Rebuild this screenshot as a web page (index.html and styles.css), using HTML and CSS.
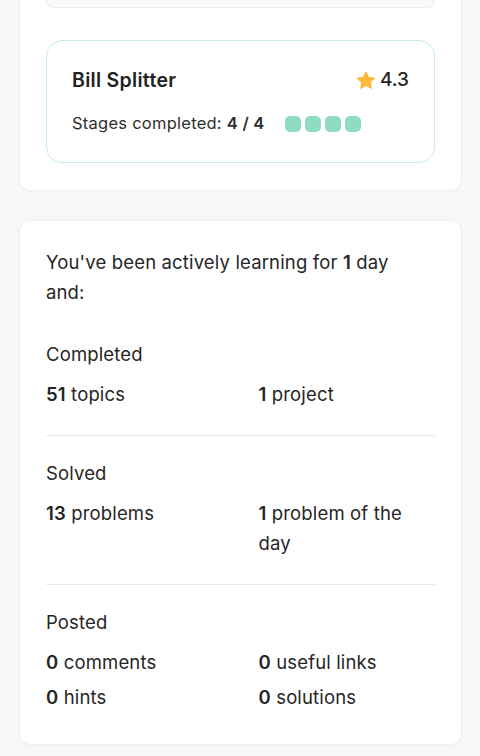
FILE: index.html
```html
<!DOCTYPE html>
<html lang="en">
<head>
<meta charset="utf-8">
<title>Profile</title>
<link rel="stylesheet" href="styles.css">
</head>
<body>
<div class="page">
  <section class="card card-top">
    <div class="prev-item"></div>
    <div class="project">
      <div class="project-head">
        <span class="project-title">Bill Splitter</span>
        <span class="rating">
          <svg class="star" width="20" height="19" viewBox="0 0 24 23" aria-hidden="true"><path d="M12 1.2l3.1 6.6 7.1.9-5.2 4.9 1.3 7.1L12 17.3l-6.3 3.4 1.3-7.1L1.8 8.7l7.1-.9z" fill="#ffb83d" stroke="#ffb83d" stroke-width="1.6" stroke-linejoin="round"/></svg>
          <span class="rating-value">4.3</span>
        </span>
      </div>
      <div class="stages">
        <span class="stages-text">Stages completed: <b>4 / 4</b></span>
        <span class="dots"><i class="dot"></i><i class="dot"></i><i class="dot"></i><i class="dot"></i></span>
      </div>
    </div>
  </section>

  <section class="card card-stats">
    <p class="intro">You've been actively learning for <b>1</b> day<br>and:</p>
    <div class="group">
      <div class="group-title">Completed</div>
      <div class="group-grid">
        <div><b>51</b> topics</div>
        <div><b>1</b> project</div>
      </div>
    </div>
    <div class="group">
      <div class="group-title">Solved</div>
      <div class="group-grid">
        <div><b>13</b> problems</div>
        <div><b>1</b> problem of the day</div>
      </div>
    </div>
    <div class="group group-last">
      <div class="group-title">Posted</div>
      <div class="group-grid">
        <div><b>0</b> comments</div>
        <div><b>0</b> useful links</div>
        <div><b>0</b> hints</div>
        <div><b>0</b> solutions</div>
      </div>
    </div>
  </section>
</div>
</body>
</html>
```
FILE: styles.css
```css
html, body {
  margin: 0;
  padding: 0;
  background: #f6f7f9;
}
body {
  font-family: Inter, "Noto Sans", sans-serif;
  color: #262626;
}
.page {
  padding: 0 19px 11px 20px;
  display: flex;
  flex-direction: column;
  gap: 31px;
}
.card {
  background: #fff;
  border-radius: 10px;
  box-shadow: 0 0 0 1px #eef0f3, 0 1px 3px rgba(0, 0, 0, 0.04);
}
.card-top {
  border-top-left-radius: 0;
  border-top-right-radius: 0;
  padding: 0 26px 27px;
  display: flex;
  flex-direction: column;
  gap: 32px;
}
.prev-item {
  height: 7px;
  background: #f8f9fa;
  border: 1px solid #ebedf0;
  border-top: none;
  border-radius: 0 0 8px 8px;
}
.project {
  border: 1px solid #c9efe1;
  border-radius: 16px;
  padding: 27px 25px 27px;
  display: flex;
  flex-direction: column;
  gap: 19px;
}
.project-head {
  display: flex;
  justify-content: space-between;
  align-items: center;
  height: 24px;
}
.project-title {
  font-size: 19.5px;
  font-weight: 600;
  letter-spacing: 0.3px;
  line-height: 24px;
  color: #222;
}
.rating {
  display: flex;
  align-items: center;
  gap: 4px;
}
.star {
  display: block;
}
.rating-value {
  font-size: 19px;
  font-weight: 500;
  line-height: 24px;
  color: #222;
}
.stages {
  display: flex;
  align-items: center;
  gap: 20px;
  font-size: 16.5px;
  letter-spacing: 0.25px;
  line-height: 24px;
  color: #2e2e2e;
}
.stages b {
  font-weight: 600;
}
.dots {
  display: flex;
  gap: 4px;
  margin-top: 2px;
}
.dot {
  width: 16px;
  height: 16px;
  border-radius: 5px;
  background: #8fdcc3;
}
.card-stats {
  padding: 26px 26px 32px;
  font-size: 18.5px;
  letter-spacing: 0.15px;
  line-height: 30px;
}
.card-stats b {
  font-weight: 600;
}
.intro {
  margin: 0 0 10px;
}
.group {
  padding: 22px 0 26px;
  border-bottom: 1px solid #e9eaec;
}
.group-last {
  border-bottom: none;
  padding-bottom: 0;
}
.group-title {
  margin-bottom: 10px;
}
.group-grid {
  display: grid;
  grid-template-columns: 1fr 1fr;
  column-gap: 36px;
  row-gap: 5px;
}
```
